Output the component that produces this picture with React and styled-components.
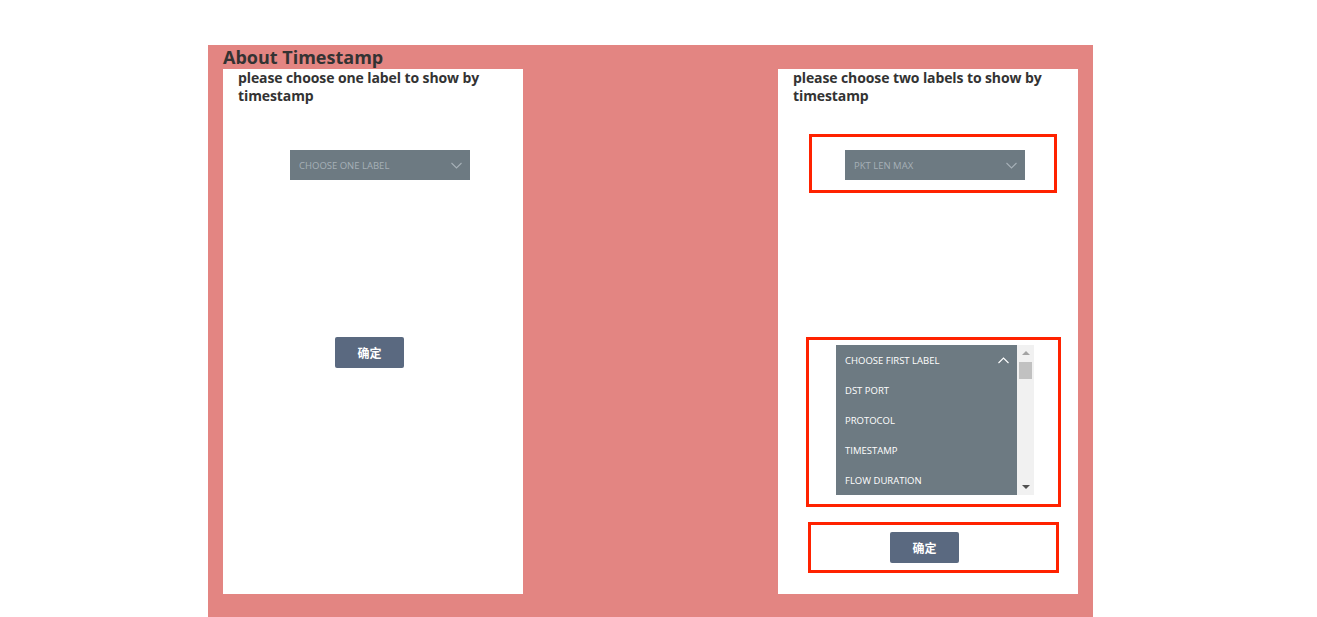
import React from "react";
import styled, { createGlobalStyle } from "styled-components";

const Global = createGlobalStyle`
  html, body { margin: 0; padding: 0; background: #fff; }
  body { font-family: "Open Sans", "Noto Sans", sans-serif; }
  * { box-sizing: border-box; }
`;

const Page = styled.div`
  padding: 45px 0 0 208px;
`;

const Board = styled.section`
  width: 885px;
  height: 580px;
  background: #e38582;
  padding: 0 15px;
`;

const Title = styled.h1`
  margin: 0;
  height: 24px;
  font-size: 18px;
  line-height: 24px;
  font-weight: 700;
  color: #333;
`;

const Row = styled.div`
  display: flex;
  justify-content: space-between;
`;

const Panel = styled.div`
  position: relative;
  width: 300px;
  height: 525px;
  background: #fff;
  padding: 0 0 0 15px;
  display: flex;
  flex-direction: column;
`;

const Prompt = styled.p`
  margin: 0;
  width: 260px;
  font-size: 14px;
  line-height: 18px;
  font-weight: 700;
  letter-spacing: -0.1px;
  color: #333;
`;

const Select = styled.div`
  margin: ${(p) => p.$top}px 0 0 52px;
  width: 180px;
  height: 30px;
  background: #6d7a82;
  display: flex;
  align-items: center;
  justify-content: space-between;
  padding: 0 8px 0 9px;
  font-size: 9.5px;
  color: #a6b0b7;
  text-transform: uppercase;
`;

const ListWrap = styled.div`
  margin: ${(p) => p.$top}px 0 0 43px;
  display: flex;
  width: 198px;
  height: 150px;
`;

const List = styled.ul`
  margin: 0;
  padding: 0;
  list-style: none;
  width: 181px;
  background: #6d7a82;
`;

const Item = styled.li`
  height: 30px;
  display: flex;
  align-items: center;
  justify-content: space-between;
  padding: 0 8px 0 9px;
  font-size: 9.5px;
  font-weight: 500;
  color: #fff;
`;

const Scroll = styled.div`
  position: relative;
  width: 17px;
  background: #f1f1f1;
`;

const Arrow = styled.span`
  position: absolute;
  left: 5px;
  ${(p) => (p.$down ? "bottom: 6px;" : "top: 6px;")}
  width: 0;
  height: 0;
  border-left: 4px solid transparent;
  border-right: 4px solid transparent;
  ${(p) =>
    p.$down
      ? "border-top: 4px solid #505050;"
      : "border-bottom: 4px solid #a3a3a3;"}
`;

const Thumb = styled.div`
  position: absolute;
  left: 2px;
  top: 17px;
  width: 13px;
  height: 17px;
  background: #c1c1c1;
`;

const Button = styled.button`
  margin: ${(p) => p.$top}px 0 0 97px;
  width: 69px;
  height: 31px;
  border: none;
  border-radius: 2px;
  background: #5a6980;
  color: #fff;
  font-family: "Noto Sans CJK SC", sans-serif;
  font-size: 12px;
  font-weight: 700;
  padding: 0;
`;

const Mark = styled.div`
  position: absolute;
  left: ${(p) => p.$x}px;
  top: ${(p) => p.$y}px;
  width: ${(p) => p.$w}px;
  height: ${(p) => p.$h}px;
  border: 3px solid #ff2200;
  pointer-events: none;
`;

const Chevron = ({ up }) => (
  <svg width="11" height="7" viewBox="0 0 11 7" fill="none">
    <path
      d={up ? "M0.5 6 L5.5 1 L10.5 6" : "M0.5 1 L5.5 6 L10.5 1"}
      stroke={up ? "#ffffff" : "#a6b0b7"}
      strokeWidth="1.1"
    />
  </svg>
);

export default function App() {
  const items = ["DST PORT", "PROTOCOL", "TIMESTAMP", "FLOW DURATION"];
  return (
    <Page>
      <Global />
      <Board>
        <Title>About Timestamp</Title>
        <Row>
          <Panel>
            <Prompt>please choose one label to show by timestamp</Prompt>
            <Select $top={45}>
              <span>Choose one label</span>
              <Chevron />
            </Select>
            <Button $top={157}>确定</Button>
          </Panel>
          <Panel>
            <Prompt>please choose two labels to show by timestamp</Prompt>
            <Select $top={45}>
              <span>PKT LEN MAX</span>
              <Chevron />
            </Select>
            <ListWrap $top={165}>
              <List>
                <Item>
                  <span>CHOOSE FIRST LABEL</span>
                  <Chevron up />
                </Item>
                {items.map((t) => (
                  <Item key={t}>{t}</Item>
                ))}
              </List>
              <Scroll>
                <Arrow />
                <Thumb />
                <Arrow $down />
              </Scroll>
            </ListWrap>
            <Button $top={37}>确定</Button>
            <Mark $x={31} $y={65} $w={248} $h={59} />
            <Mark $x={28} $y={268} $w={255} $h={170} />
            <Mark $x={30} $y={453} $w={251} $h={51} />
          </Panel>
        </Row>
      </Board>
    </Page>
  );
}
